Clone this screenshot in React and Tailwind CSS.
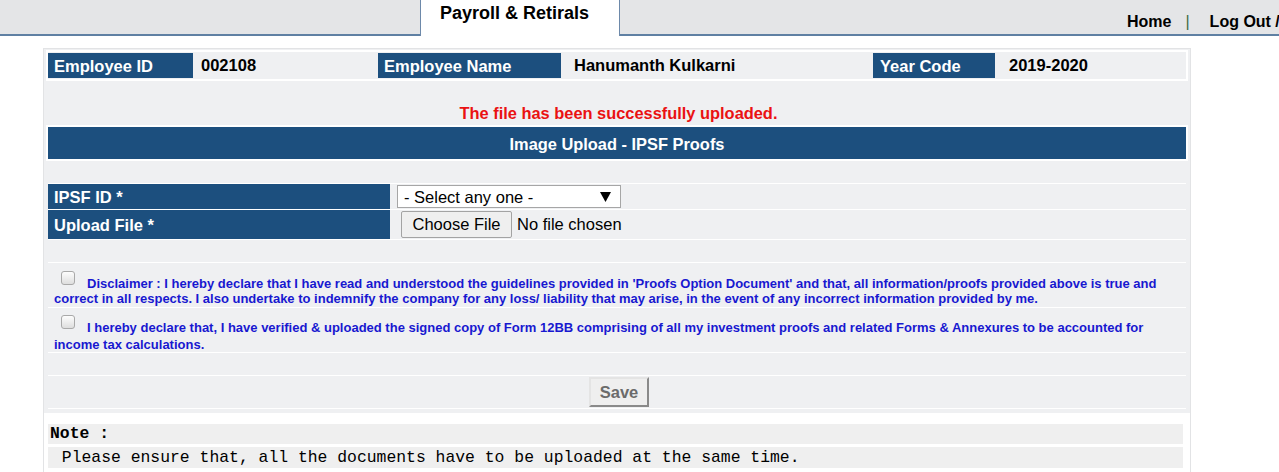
export default function App() {
  const label = "bg-[#1c4f7e] text-white font-bold text-[16.5px] leading-[20px]";
  const Checkbox = () => (
    <span className="inline-block align-baseline w-[14px] h-[14px] ml-[7px] mr-[12px] mb-[3px] rounded-[3px] border border-[#a9a9a9] bg-gradient-to-b from-[#fdfdfd] to-[#dedede]" />
  );
  return (
    <div className="w-[1279px] h-[472px] overflow-hidden bg-white text-black font-['Liberation_Sans',Arial,sans-serif]">
      {/* top bar */}
      <div className="flex h-[36px]">
        <div className="w-[420px] bg-[#e4e5e7] border-b-2 border-[#5f80a3]" />
        <div className="w-[200px] bg-white border-x border-[#6d89aa] flex justify-start pl-[19px] pt-[2px]">
          <span className="text-[18px] font-bold leading-[22px]">Payroll &amp; Retirals</span>
        </div>
        <div className="flex-1 bg-[#e4e5e7] border-b-2 border-[#5f80a3] flex items-end pl-[507px] pb-[2px] whitespace-nowrap overflow-hidden text-[16px] font-bold leading-[20px]">
          <span>Home</span>
          <span className="ml-[14px] font-normal text-[#3f6b3f]">|</span>
          <span className="ml-[20px]">Log Out /</span>
        </div>
      </div>

      {/* wrapper */}
      <div className="ml-[43px] mt-[12px] w-[1148px] h-[430px] border-x border-t border-[#e2e3e5]">
        <div className="bg-[#eff0f2] pt-[1px] pb-[4px]">
          {/* employee row */}
          <div className="mx-[2px] border-2 border-white py-[1px]">
            <div className="flex h-[25px] items-stretch">
              <div className={`w-[145px] pl-[6px] flex items-center ${label}`}>Employee ID</div>
              <div className="w-[185px] pl-[8px] flex items-center font-bold text-[16.5px]">002108</div>
              <div className={`w-[183px] pl-[6px] flex items-center ${label}`}>Employee Name</div>
              <div className="w-[312px] pl-[13px] flex items-center font-bold text-[16.5px]">Hanumanth Kulkarni</div>
              <div className={`w-[122px] pl-[7px] flex items-center ${label}`}>Year Code</div>
              <div className="flex-1 pl-[14px] flex items-center font-bold text-[16.5px]">2019-2020</div>
            </div>
          </div>

          {/* message */}
          <div className="h-[44px] flex items-end justify-center pb-[3px] pl-[3px]">
            <span className="text-[#ea1212] font-bold text-[16.4px] leading-[18px]">
              The file has been successfully uploaded.
            </span>
          </div>

          {/* header */}
          <div className="mx-[2px] border-2 border-white">
            <div className="h-[32px] bg-[#1c4f7e] flex items-center justify-center pt-[2px] text-white font-bold text-[16.4px]">
              Image Upload - IPSF Proofs
            </div>
          </div>

          {/* form */}
          <div className="mx-[4px]">
            <div className="h-[22px]" />
            <div className="h-[26px] border-t border-white flex items-stretch">
              <div className={`w-[342px] pl-[6px] flex items-center ${label}`}>IPSF ID *</div>
              <div className="flex items-center pl-[7px]">
                <div className="w-[224px] h-[23px] bg-white border border-[#a6a6a6] flex items-center justify-between pl-[6px] pr-[9px] text-[16.5px] leading-[20px]">
                  <span>- Select any one -</span>
                  <svg width="11" height="10" viewBox="0 0 11 10">
                    <polygon points="0,0 11,0 5.5,10" fill="#000" />
                  </svg>
                </div>
              </div>
            </div>
            <div className="h-[30px] border-t border-white flex items-stretch">
              <div className={`w-[342px] pl-[6px] flex items-center ${label}`}>Upload File *</div>
              <div className="flex items-center pl-[11px] text-[16.5px]">
                <div className="w-[111px] h-[27px] bg-[#efefef] border border-[#a3a3a3] rounded-[2px] flex items-center justify-center">
                  Choose File
                </div>
                <span className="ml-[5px]">No file chosen</span>
              </div>
            </div>
            <div className="h-[23px] border-t border-white" />
            <div className="h-[45px] border-t border-white pl-[6px] pr-[4px] pt-[8px] text-[#1818d0] font-bold text-[13px] leading-[15px]">
              <Checkbox />
              Disclaimer : I hereby declare that I have read and understood the guidelines provided in &#39;Proofs Option Document&#39; and that, all information/proofs provided above is true and{" "}
              <br />
              correct in all respects. I also undertake to indemnify the company for any loss/ liability that may arise, in the event of any incorrect information provided by me.
            </div>
            <div className="h-[45px] border-t border-white pl-[6px] pr-[4px] pt-[7px] text-[#1818d0] font-bold text-[13px] leading-[17px]">
              <Checkbox />
              I hereby declare that, I have verified &amp; uploaded the signed copy of Form 12BB comprising of all my investment proofs and related Forms &amp; Annexures to be accounted for{" "}
              <br />
              income tax calculations.
            </div>
            <div className="h-[23px] border-t border-white" />
            <div className="h-[33px] border-t border-white flex items-center justify-center pl-[4px]">
              <div className="w-[60px] h-[30px] bg-[#efefef] border-2 border-t-[#e4e4e4] border-l-[#e4e4e4] border-b-[#8a8a8a] border-r-[#8a8a8a] flex items-center justify-center text-[#6b6b6b] font-bold text-[16.5px]">
                Save
              </div>
            </div>
            <div className="border-t border-white" />
          </div>
        </div>

        {/* note */}
        <div className="mt-[11px] ml-[4px] w-[1135px] font-['Liberation_Mono','Courier_New',monospace] text-[16.4px] leading-[20px]">
          <div className="h-[20px] bg-[#efefef] pl-[2px] font-bold whitespace-pre">Note :</div>
          <div className="h-[21px] mt-[3px] bg-[#efefef] pl-[4px] flex items-center whitespace-pre">
            {" Please ensure that, all the documents have to be uploaded at the same time."}
          </div>
        </div>
      </div>
    </div>
  );
}
